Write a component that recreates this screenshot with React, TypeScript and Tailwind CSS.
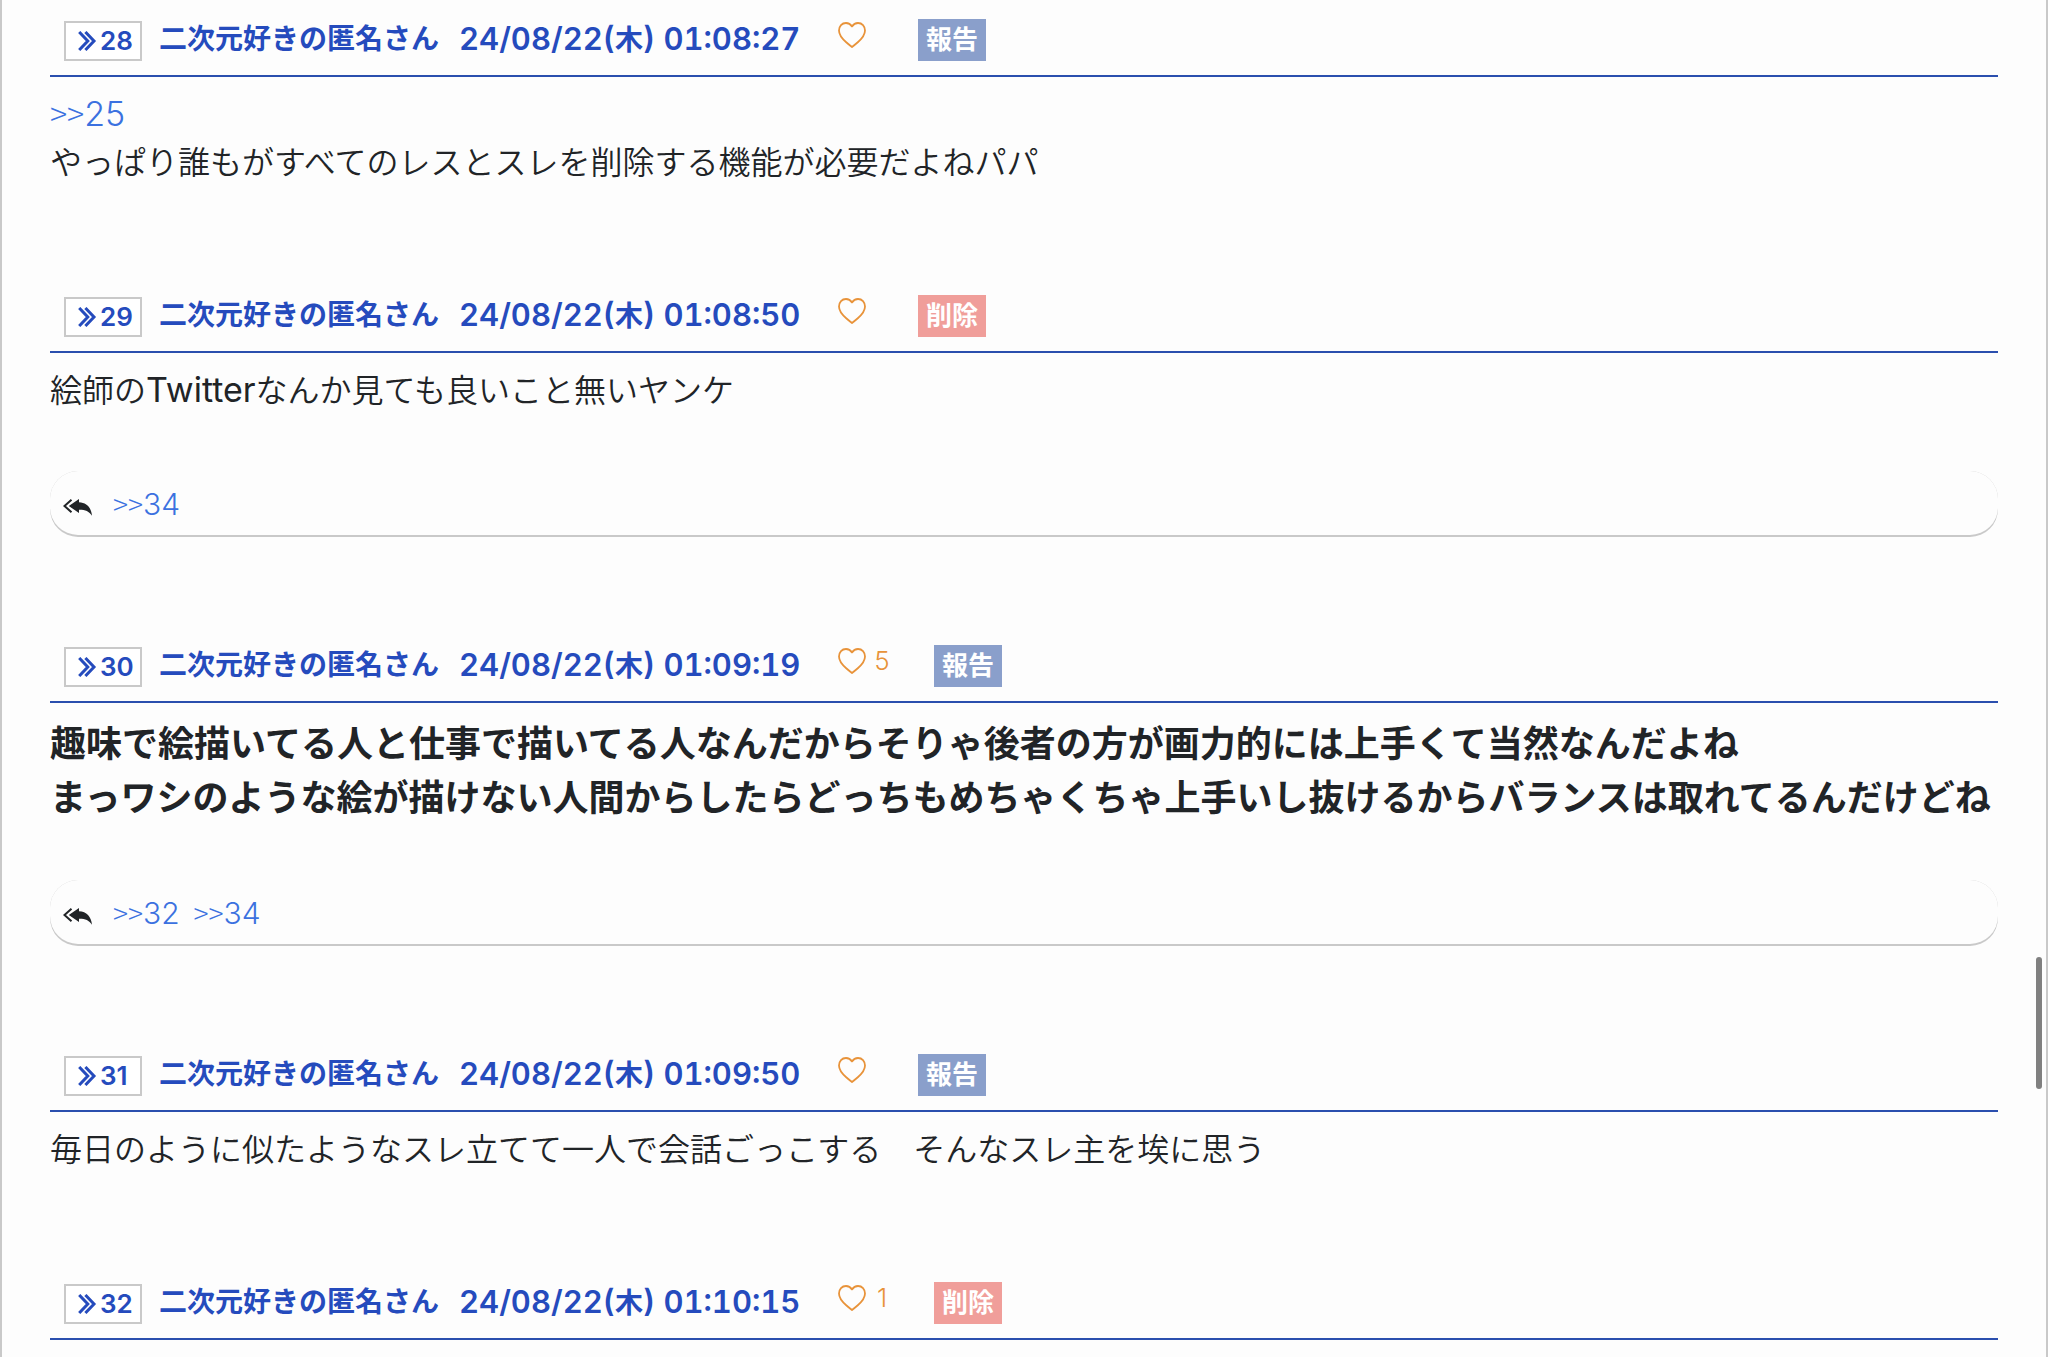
import React from 'react';

type Post = {
  id: number;
  time: string;
  likes?: number;
  own?: boolean;
  body: React.ReactNode;
  large?: boolean;
  replies?: number[];
};

function Anchor({ id, small = false }: { id: number; small?: boolean }) {
  return (
    <a href={`#res${id}`} className="font-[350] text-[#3b71e0]">
      <span className={small ? 'text-[28px] leading-none font-light' : 'text-[32px] leading-none font-light'}>
        &gt;&gt;
      </span>
      <span className={small ? 'font-[Inter] text-[30px] leading-none' : 'font-[Inter] text-[34px] leading-none'}>
        {id}
      </span>
    </a>
  );
}

const posts: Post[] = [
  {
    id: 28,
    time: '01:08:27',
    body: (
      <>
        <Anchor id={25} />
        <br />
        やっぱり誰もがすべてのレスとスレを削除する機能が必要だよねパパ
      </>
    ),
  },
  {
    id: 29,
    time: '01:08:50',
    own: true,
    body: (
      <>
        絵師の
        <span className="font-[Inter] text-[34px] leading-none font-normal">Twitter</span>
        なんか見ても良いこと無いヤンケ
      </>
    ),
    replies: [34],
  },
  {
    id: 30,
    time: '01:09:19',
    likes: 5,
    large: true,
    body: (
      <>
        趣味で絵描いてる人と仕事で描いてる人なんだからそりゃ後者の方が画力的には上手くて当然なんだよね
        <br />
        まっワシのような絵が描けない人間からしたらどっちもめちゃくちゃ上手いし抜けるからバランスは取れてるんだけどね
      </>
    ),
    replies: [32, 34],
  },
  {
    id: 31,
    time: '01:09:50',
    body: <>毎日のように似たようなスレ立てて一人で会話ごっこする　そんなスレ主を埃に思う</>,
  },
  { id: 32, time: '01:10:15', likes: 1, own: true, body: null },
];

function QuoteIcon() {
  return (
    <svg viewBox="0 0 19 20" className="h-5 w-[19px] shrink-0" fill="none" stroke="currentColor" strokeWidth="3" aria-hidden="true">
      <path d="M1.2 1 9.8 10l-8.6 9M7.400 1 16 10l-8.6 9" />
    </svg>
  );
}

function HeartIcon() {
  return (
    <svg viewBox="0 0 28 26" className="h-[26px] w-7" fill="none" stroke="currentColor" strokeWidth="1.8" strokeLinejoin="round" aria-hidden="true">
      <path d="M14 4.4C12.6 2.2 10.4 1 8 1 4 1 1 4.1 1 8.6c0 5.2 3.6 8.6 7.2 11.7 2.2 1.9 4.2 3.5 5.8 4.7 1.6-1.2 3.6-2.8 5.8-4.7C23.4 17.2 27 13.8 27 8.6 27 4.1 24 1 20 1c-2.4 0-4.6 1.2-6 3.4Z" />
    </svg>
  );
}

function ReplyAllIcon() {
  return (
    <svg viewBox="0 0 29 17" className="mt-2 h-[17px] w-[29px]" aria-hidden="true">
      <path d="M8.5 .8 1.5 7l7 6.2" fill="none" stroke="currentColor" strokeWidth="2" />
      <path d="M5.8 7 16 0v3.2c7.6.3 12.2 5.2 13 13.6-3-4.8-6.8-6.2-13-6.1V14Z" fill="currentColor" />
    </svg>
  );
}

function PostItem({ post }: { post: Post }) {
  return (
    <article id={`res${post.id}`}>
      <header className="flex items-end border-b-2 border-[#2b4fae] pb-3.5 pl-3.5">
        <a
          href={`#res${post.id}`}
          className="flex h-10 w-[78px] shrink-0 items-center gap-[3px] border-2 border-[#c9c9c9] bg-white pl-3 font-[Inter] text-[26px] leading-9 font-semibold text-[#254bbd]"
        >
          <QuoteIcon />
          {post.id}
        </a>
        <div className="ml-[17px] flex h-[42px] items-start gap-5 whitespace-nowrap text-[28px] leading-9 font-bold text-[#254bbd]">
          <span>二次元好きの匿名さん</span>
          <time className="w-[344px] font-[Inter] text-[31px] leading-10 font-semibold tabular-nums">
            24/08/22(<span className="font-['Noto_Sans_CJK_JP'] text-[28px] leading-none font-bold">木</span>) {post.time}
          </time>
        </div>
        <button
          type="button"
          aria-label="いいね"
          className="ml-[35px] flex h-[42px] items-start gap-2 pt-[3px] font-[Inter] text-[26px] leading-[26px] font-[350] text-[#e8933a]"
        >
          <HeartIcon />
          <span className={post.likes ? 'w-4 text-center' : 'w-0'}>{post.likes}</span>
        </button>
        <button
          type="button"
          className={
            post.own
              ? 'ml-11 h-[42px] bg-[#f09e9a] px-2 pb-1 text-[26px] leading-9 font-bold text-white'
              : 'ml-11 h-[42px] bg-[#8a9fcb] px-2 pb-1 text-[26px] leading-9 font-bold text-white'
          }
        >
          {post.own ? '削除' : '報告'}
        </button>
      </header>
      {post.body && (
        <p
          className={
            post.large
              ? 'pt-[11px] pb-0.5 text-[36px] leading-[54px] font-bold'
              : 'pt-[11px] pb-[3px] text-[32px] leading-[48px] font-[350]'
          }
        >
          {post.body}
        </p>
      )}
      {post.replies && (
        <div className="mt-14 rounded-[28px] bg-[#c9c9c9] pb-0.5">
          <div className="flex h-16 items-center rounded-[28px] bg-[#fdfdfd] pl-[13px]">
            <ReplyAllIcon />
            <div className="ml-[21px] flex gap-3.5 text-[28px] leading-10">
              {post.replies.map((id) => (
                <Anchor key={id} id={id} small />
              ))}
            </div>
          </div>
        </div>
      )}
    </article>
  );
}

export default function App() {
  return (
    <div className="relative h-screen overflow-hidden bg-[#fdfdfd]">
      <main className="flex min-h-screen flex-col gap-[108px] border-x-2 border-[#c9c9c9] px-12 pt-[19px] font-['Noto_Sans_CJK_JP',sans-serif] text-[#212427]">
        {posts.map((post) => (
          <PostItem key={post.id} post={post} />
        ))}
      </main>
      <div className="absolute top-[957px] right-1.5 h-[132px] w-1.5 rounded-full bg-[#808080]" />
    </div>
  );
}
